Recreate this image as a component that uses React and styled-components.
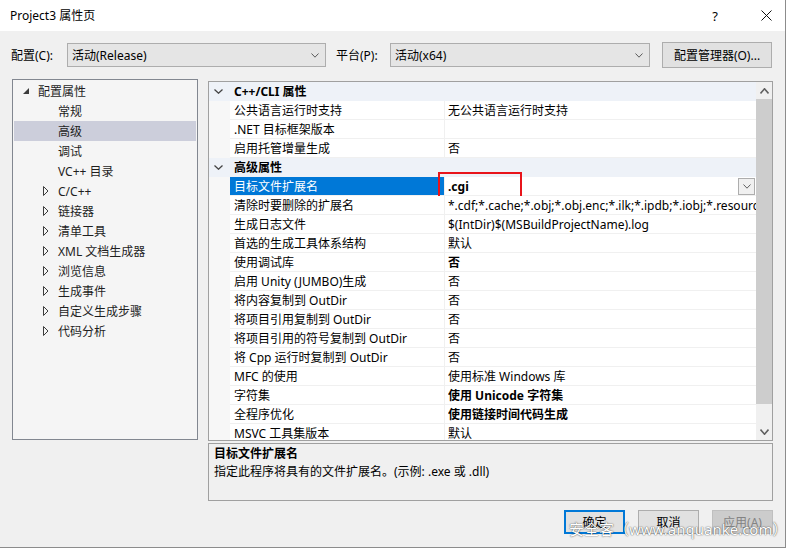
import styled, { createGlobalStyle } from 'styled-components';

// 全局
const GlobalStyle = createGlobalStyle`
  body {
    margin: 0;
    background: #ffffff;
    font-family: "Noto Sans", "Noto Sans CJK SC", sans-serif;
    font-size: 12px;
    color: #000;
  }
`;

// 窗口
const Window = styled.div`
  position: relative;
  width: 786px;
  height: 548px;
  box-sizing: border-box;
  display: flex;
  flex-direction: column;
  background: #f0f0f0;
  border-right: 1px solid #8c8c8c;
  border-bottom: 1px solid #8c8c8c;
  overflow: hidden;
`;
const TitleBar = styled.div`
  height: 31px;
  flex: none;
  display: flex;
  align-items: center;
  background: #fff;
  padding: 0 13px 0 10px;
`;
const Title = styled.div`
  flex: 1;
  line-height: 16px;
`;
const Caption = styled.div`
  display: flex;
  align-items: center;
  gap: 43px;
  font-size: 13px;
`;

// 配置行
const ConfigRow = styled.div`
  margin-top: 11px;
  height: 26px;
  display: flex;
  align-items: center;
  padding-left: 11px;
`;
const Label = styled.span`
  width: ${p => p.$w}px;
  margin-left: ${p => p.$ml || 0}px;
  flex: none;
`;
const Combo = styled.div`
  width: ${p => p.$w}px;
  height: 24px;
  box-sizing: border-box;
  display: flex;
  align-items: center;
  justify-content: space-between;
  padding: 0 6px 0 4px;
  background: #e5e5e5;
  border: 1px solid #adadad;
`;
const Button = styled.div`
  width: ${p => p.$w || 61}px;
  height: ${p => p.$h || 24}px;
  margin-left: ${p => p.$ml || 0}px;
  box-sizing: border-box;
  display: flex;
  align-items: center;
  justify-content: center;
  background: ${p => (p.$disabled ? '#cccccc' : '#e1e1e1')};
  border: ${p => (p.$primary ? '2px solid #0078d7' : `1px solid ${p.$disabled ? '#bfbfbf' : '#adadad'}`)};
  color: ${p => (p.$disabled ? '#838383' : '#000')};
`;

// 主体
const Main = styled.div`
  margin-top: 11px;
  display: flex;
  align-items: flex-start;
  gap: 10px;
  padding: 0 12px 0 12px;
`;
const Tree = styled.div`
  width: 186px;
  height: 361px;
  box-sizing: border-box;
  border: 1px solid #828790;
  background: #f5f5f5;
  padding-top: 1px;
`;
const TreeRow = styled.div`
  height: 20px;
  margin: 0 1px;
  display: flex;
  align-items: center;
  padding-left: ${p => 9 + p.$level * 20}px;
  background: ${p => (p.$selected ? '#cccedb' : 'transparent')};
  color: #1e1e1e;
`;
const Arrow = styled.span`
  width: 15px;
  flex: none;
  display: flex;
  align-items: center;
`;

// 属性表
const Grid = styled.div`
  margin-top: 2px;
  width: 565px;
  height: 360px;
  box-sizing: border-box;
  border: 1px solid #a0a0a0;
  background: #fff;
  display: flex;
`;
const Rows = styled.div`
  flex: 1;
  overflow: hidden;
`;
const Row = styled.div`
  position: relative;
  height: 19px;
  display: grid;
  grid-template-columns: 21px 214px 1fr;
  background: ${p => (p.$category ? '#eef2f8' : '#fff')};
`;
const Gutter = styled.div`
  background: ${p => (p.$category ? 'transparent' : '#f7f7f7')};
  display: flex;
  align-items: center;
  justify-content: center;
  padding-right: 2px;
`;
const NameCell = styled.div`
  box-sizing: border-box;
  border-bottom: 1px solid ${p => (p.$category ? 'transparent' : '#f0f0f0')};
  padding-left: 4px;
  line-height: 20px;
  white-space: nowrap;
  overflow: hidden;
  font-weight: ${p => (p.$category ? 700 : 400)};
  background: ${p => (p.$selected ? '#0078d7' : 'transparent')};
  color: ${p => (p.$selected ? '#fff' : '#000')};
  grid-column: ${p => (p.$category ? '2 / 4' : 'auto')};
`;
const ValueCell = styled.div`
  box-sizing: border-box;
  display: flex;
  align-items: center;
  min-width: 0;
  border-left: 1px solid #f0f0f0;
  border-bottom: 1px solid #f0f0f0;
  padding-left: 3px;
  font-weight: ${p => (p.$bold ? 700 : 400)};
`;
const ValueText = styled.span`
  flex: 1;
  min-width: 0;
  overflow: hidden;
  white-space: nowrap;
  line-height: 20px;
  height: 18px;
`;
const DropButton = styled.div`
  width: 17px;
  height: 17px;
  flex: none;
  box-sizing: border-box;
  margin-right: 1px;
  display: flex;
  align-items: center;
  justify-content: center;
  background: #f0f0f0;
  border: 1px solid #adadad;
`;
const Highlight = styled.div`
  position: absolute;
  left: 229px;
  top: -5px;
  width: 84px;
  height: 26px;
  box-sizing: border-box;
  border: 2px solid #e8141b;
`;
const Scrollbar = styled.div`
  width: 16px;
  background: #f0f0f0;
  display: flex;
  flex-direction: column;
`;
const ScrollArrow = styled.div`
  height: 17px;
  display: flex;
  align-items: center;
  justify-content: center;
`;
const Thumb = styled.div`
  height: 305px;
  background: #cdcdcd;
`;
const Track = styled.div`
  flex: 1;
`;

// 描述
const Description = styled.div`
  margin: 2px 12px 0 208px;
  height: 58px;
  box-sizing: border-box;
  border: 1px solid #a0a0a0;
  padding: 1px 5px;
  line-height: 18px;
  h4 {
    margin: 0;
    font-size: 12px;
    font-weight: 700;
  }
`;
const ButtonRow = styled.div`
  margin-top: 9px;
  display: flex;
  justify-content: flex-end;
  gap: 13px;
  padding-right: 12px;
`;
const Watermark = styled.div`
  position: absolute;
  left: 569px;
  top: 519px;
  font-size: 15px;
  line-height: 20px;
  color: #fff;
  text-shadow: 0 0 1px rgba(0, 0, 0, 0.7), 0 0 2px rgba(0, 0, 0, 0.35);
  white-space: nowrap;
`;

const Chevron = ({ up, color = '#5a5a5a', w = 8, h = 5, sw = 1 }) => (
  <svg width={w} height={h} viewBox={`0 0 ${w} ${h}`}>
    <polyline
      points={up ? `0.5,${h - 0.5} ${w / 2},0.8 ${w - 0.5},${h - 0.5}` : `0.5,0.5 ${w / 2},${h - 0.8} ${w - 0.5},0.5`}
      fill='none'
      stroke={color}
      strokeWidth={sw}
    />
  </svg>
);

const Close = () => (
  <svg width='11' height='11' viewBox='0 0 11 11'>
    <path d='M0.5 0.5 L10.5 10.5 M10.5 0.5 L0.5 10.5' stroke='#111' strokeWidth='1' />
  </svg>
);

const Expanded = () => (
  <svg width='6' height='6' viewBox='0 0 6 6'>
    <polygon points='6,0 6,6 0,6' fill='#3c3c3c' />
  </svg>
);
const Collapsed = () => (
  <svg width='6' height='10' viewBox='0 0 6 10'>
    <polygon points='0.5,0.5 5,5 0.5,9.5' fill='none' stroke='#3c3c3c' strokeWidth='1' />
  </svg>
);

const treeItems = [
  { label: '配置属性', level: 0, state: 'open' },
  { label: '常规', level: 1 },
  { label: '高级', level: 1, selected: true },
  { label: '调试', level: 1 },
  { label: 'VC++ 目录', level: 1 },
  { label: 'C/C++', level: 1, state: 'closed' },
  { label: '链接器', level: 1, state: 'closed' },
  { label: '清单工具', level: 1, state: 'closed' },
  { label: 'XML 文档生成器', level: 1, state: 'closed' },
  { label: '浏览信息', level: 1, state: 'closed' },
  { label: '生成事件', level: 1, state: 'closed' },
  { label: '自定义生成步骤', level: 1, state: 'closed' },
  { label: '代码分析', level: 1, state: 'closed' },
];

const props = [
  { category: 'C++/CLI 属性' },
  { name: '公共语言运行时支持', value: '无公共语言运行时支持' },
  { name: '.NET 目标框架版本', value: '' },
  { name: '启用托管增量生成', value: '否' },
  { category: '高级属性' },
  { name: '目标文件扩展名', value: '.cgi', bold: true, selected: true },
  {
    name: '清除时要删除的扩展名',
    value: '*.cdf;*.cache;*.obj;*.obj.enc;*.ilk;*.ipdb;*.iobj;*.resources;*.tlb;*.tli;*.tlh;*.tmp;*.rsp',
  },
  { name: '生成日志文件', value: '$(IntDir)$(MSBuildProjectName).log' },
  { name: '首选的生成工具体系结构', value: '默认' },
  { name: '使用调试库', value: '否', bold: true },
  { name: '启用 Unity (JUMBO)生成', value: '否' },
  { name: '将内容复制到 OutDir', value: '否' },
  { name: '将项目引用复制到 OutDir', value: '否' },
  { name: '将项目引用的符号复制到 OutDir', value: '否' },
  { name: '将 Cpp 运行时复制到 OutDir', value: '否' },
  { name: 'MFC 的使用', value: '使用标准 Windows 库' },
  { name: '字符集', value: '使用 Unicode 字符集', bold: true },
  { name: '全程序优化', value: '使用链接时间代码生成', bold: true },
  { name: 'MSVC 工具集版本', value: '默认' },
];

const App = () => {
  return (
    <>
      <GlobalStyle />
      <Window>
        <TitleBar>
          <Title>Project3 属性页</Title>
          <Caption>
            <span>?</span>
            <Close />
          </Caption>
        </TitleBar>

        <ConfigRow>
          <Label $w={56}>配置(C):</Label>
          <Combo $w={259}>
            <span>活动(Release)</span>
            <Chevron />
          </Combo>
          <Label $w={54} $ml={10}>平台(P):</Label>
          <Combo $w={260}>
            <span>活动(x64)</span>
            <Chevron />
          </Combo>
          <Button $w={110} $h={26} $ml={12}>配置管理器(O)...</Button>
        </ConfigRow>

        <Main>
          <Tree>
            {treeItems.map(item => (
              <TreeRow key={item.label} $level={item.level} $selected={item.selected}>
                <Arrow>
                  {item.state === 'open' && <Expanded />}
                  {item.state === 'closed' && <Collapsed />}
                </Arrow>
                {item.label}
              </TreeRow>
            ))}
          </Tree>

          <Grid>
            <Rows>
              {props.map(p =>
                p.category ? (
                  <Row key={p.category} $category>
                    <Gutter $category>
                      <Chevron color='#444' w={9} h={5} sw={1.3} />
                    </Gutter>
                    <NameCell $category>{p.category}</NameCell>
                  </Row>
                ) : (
                  <Row key={p.name}>
                    <Gutter />
                    <NameCell $selected={p.selected}>{p.name}</NameCell>
                    <ValueCell $bold={p.bold}>
                      <ValueText>{p.value}</ValueText>
                      {p.selected && (
                        <DropButton>
                          <Chevron color='#606060' w={8} h={5} />
                        </DropButton>
                      )}
                    </ValueCell>
                    {p.selected && <Highlight />}
                  </Row>
                )
              )}
            </Rows>
            <Scrollbar>
              <ScrollArrow>
                <Chevron up color='#606060' w={9} h={6} sw={1.6} />
              </ScrollArrow>
              <Thumb />
              <Track />
              <ScrollArrow>
                <Chevron color='#606060' w={9} h={6} sw={1.6} />
              </ScrollArrow>
            </Scrollbar>
          </Grid>
        </Main>

        <Description>
          <h4>目标文件扩展名</h4>
          <div>指定此程序将具有的文件扩展名。(示例: .exe 或 .dll)</div>
        </Description>

        <ButtonRow>
          <Button $primary>确定</Button>
          <Button>取消</Button>
          <Button $disabled>应用(A)</Button>
        </ButtonRow>

        <Watermark>安全客（www.anquanke.com）</Watermark>
      </Window>
    </>
  );
};

export default App;
